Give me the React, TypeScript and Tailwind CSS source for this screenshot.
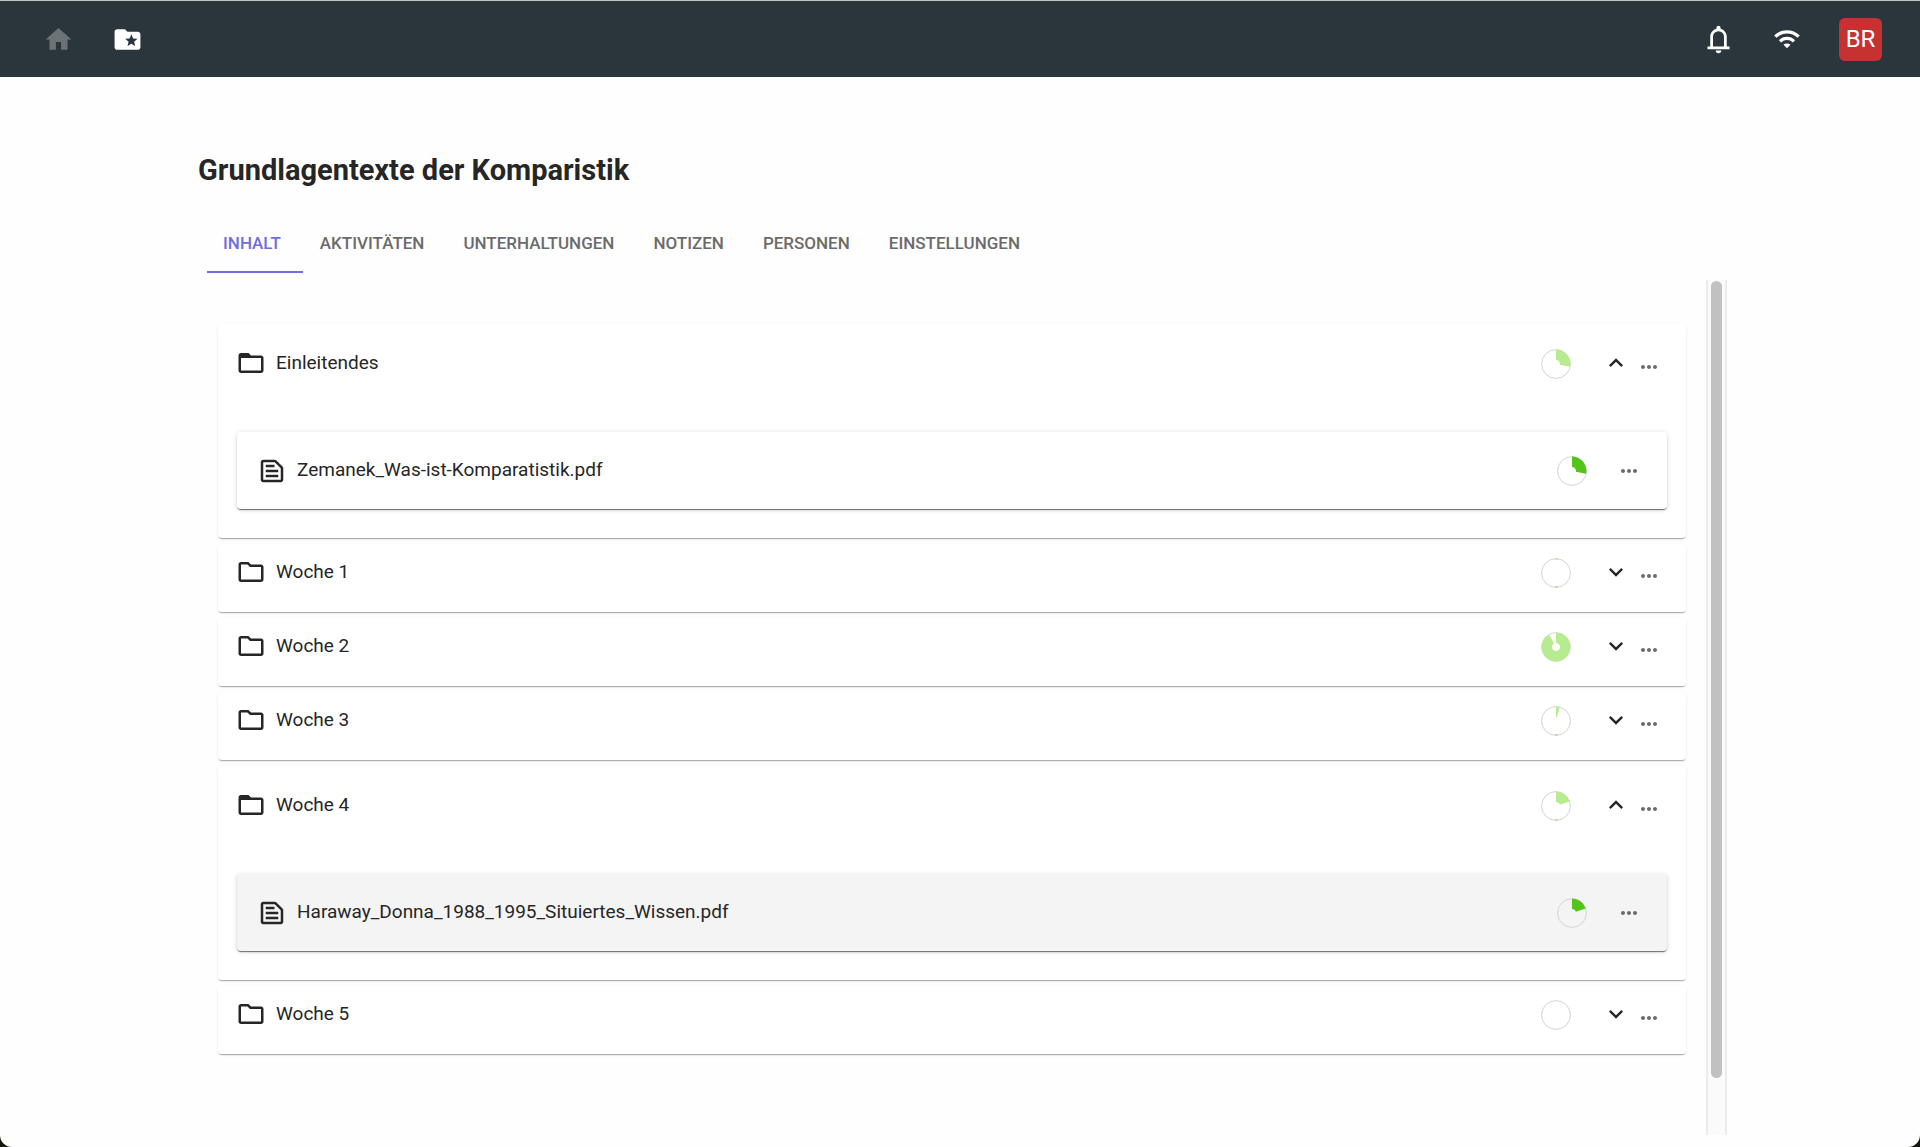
import { useState } from "react";
import {
  MdExpandLess,
  MdExpandMore,
  MdFolderOpen,
  MdFolderSpecial,
  MdHome,
  MdMoreHoriz,
  MdOutlineFolder,
  MdOutlineTextSnippet,
  MdWifi,
} from "react-icons/md";

type FileEntry = { name: string; progress: number; highlighted?: boolean };
type Folder = { name: string; progress: number; started: boolean; files: FileEntry[]; open: boolean };

const TABS = ["INHALT", "AKTIVITÄTEN", "UNTERHALTUNGEN", "NOTIZEN", "PERSONEN", "EINSTELLUNGEN"];

const FOLDERS: Folder[] = [
  {
    name: "Einleitendes",
    progress: 28,
    started: false,
    open: true,
    files: [{ name: "Zemanek_Was-ist-Komparatistik.pdf", progress: 28 }],
  },
  { name: "Woche 1", progress: 0, started: true, open: false, files: [] },
  { name: "Woche 2", progress: 92, started: false, open: false, files: [] },
  { name: "Woche 3", progress: 4, started: true, open: false, files: [] },
  {
    name: "Woche 4",
    progress: 20,
    started: true,
    open: true,
    files: [{ name: "Haraway_Donna_1988_1995_Situiertes_Wissen.pdf", progress: 20, highlighted: true }],
  },
  { name: "Woche 5", progress: 0, started: false, open: false, files: [] },
];

function BellIcon() {
  return (
    <svg viewBox="0 0 24 24" className="size-[33px]" fill="currentColor" aria-hidden="true">
      <path
        fillRule="evenodd"
        d="M4 19v-2h2v-7c0-2.77 1.88-5.11 4.5-5.8v-.7a1.5 1.5 0 0 1 3 0v.7C16.12 4.89 18 7.23 18 10v7h2v2H4zM8 17h8v-7a4 4 0 0 0-8 0v7zM12 22a2 2 0 0 1-2-2h4a2 2 0 0 1-2 2z"
      />
    </svg>
  );
}

function ProgressPie({
  value,
  strong = false,
  started = false,
}: {
  value: number;
  strong?: boolean;
  started?: boolean;
}) {
  const angle = (value / 100) * 2 * Math.PI;
  const point = (r: number) => `${15 + r * Math.sin(angle)} ${15 - r * Math.cos(angle)}`;
  const large = value > 50 ? 1 : 0;
  const wedge = `M15 .6A14.4 14.4 0 ${large} 1 ${point(14.4)}L${point(4)}A4 4 0 ${large} 0 15 11Z`;
  return (
    <svg viewBox="0 0 30 30" className="size-[30px] shrink-0" role="img" aria-label={`${value} %`}>
      <circle cx="15" cy="15" r="14.4" fill="none" stroke="#d4d4d4" />
      {value > 0 && <path d={wedge} fill={strong ? "#52c41a" : "#b7eb8f"} />}
      {started && <path d="M14 28h3v1.8h-3z" fill="#b7eb8f" />}
      {started && value === 0 && <path d="M14 .4h3v1.4h-3z" fill="#b7eb8f" />}
    </svg>
  );
}

function FileCard({ file }: { file: FileEntry }) {
  return (
    <li
      className={`flex h-[77px] items-center rounded pr-[26px] pl-5 shadow-[0_2px_1px_-1px_rgba(0,0,0,0.4),0_1px_1px_rgba(0,0,0,0.2),0_1px_5px_rgba(0,0,0,0.16)] ${
        file.highlighted ? "bg-[#f4f4f4]" : "bg-white"
      }`}
    >
      <a href="#datei" className="flex min-w-0 flex-1 items-center gap-2.5">
        <MdOutlineTextSnippet className="size-[30px] shrink-0" />
        <span className="truncate">{file.name}</span>
      </a>
      <ProgressPie value={file.progress} strong />
      <button type="button" aria-label="Mehr" className="ml-[30px] text-[#6b6b6b]">
        <MdMoreHoriz className="size-6" />
      </button>
    </li>
  );
}

function FolderCard({ folder }: { folder: Folder }) {
  const [open, setOpen] = useState(folder.open);
  const FolderIcon = open ? MdFolderOpen : MdOutlineFolder;
  const Chevron = open ? MdExpandLess : MdExpandMore;
  return (
    <section className="rounded bg-white shadow-[0_2px_1px_-1px_rgba(0,0,0,0.3),0_1px_3px_rgba(0,0,0,0.1)]">
      <div className={`flex items-center pr-[25px] pl-[18px] ${open ? "pt-[23px] pb-[53px]" : "pt-3 pb-6"}`}>
        <button
          type="button"
          onClick={() => setOpen(!open)}
          className="flex h-8 min-w-0 flex-1 items-center gap-2.5 text-left"
        >
          <FolderIcon className="size-[30px] shrink-0" />
          <span className="truncate">{folder.name}</span>
        </button>
        <div className="pt-0.5">
          <ProgressPie value={folder.progress} started={folder.started} />
        </div>
        <button
          type="button"
          aria-label={open ? "Zuklappen" : "Aufklappen"}
          onClick={() => setOpen(!open)}
          className="ml-[31px]"
        >
          <Chevron className="size-7" />
        </button>
        <button type="button" aria-label="Mehr" className="ml-[7px] pt-2 text-[#6b6b6b]">
          <MdMoreHoriz className="size-6" />
        </button>
      </div>
      {open && folder.files.length > 0 && (
        <ul className="px-[19px] pb-[29px]">
          {folder.files.map((file) => (
            <FileCard key={file.name} file={file} />
          ))}
        </ul>
      )}
    </section>
  );
}

export default function App() {
  const [tab, setTab] = useState(TABS[0]);
  return (
    <div className="min-h-screen bg-[#14160c] font-[Roboto,sans-serif] text-[19px] text-[#262626]">
      <div className="flex min-h-screen flex-col rounded-b-xl bg-[#fefefe]">
        <header className="flex h-[77px] items-center justify-between border-t border-[#c0c4c5] bg-[#2b363c] pr-[38px] pl-[43px] text-white">
          <nav className="flex items-center gap-[38px]">
            <a href="#start" aria-label="Startseite" className="text-[#6b7377]">
              <MdHome className="size-[31px]" />
            </a>
            <a href="#kurse" aria-label="Kurse">
              <MdFolderSpecial className="size-[31px]" />
            </a>
          </nav>
          <div className="flex items-center">
            <button type="button" aria-label="Benachrichtigungen">
              <BellIcon />
            </button>
            <MdWifi className="ml-[38px] size-7" role="img" aria-label="Verbunden" />
            <button
              type="button"
              className="ml-[38px] flex size-[43px] items-center justify-center rounded-md bg-[#c53231] text-2xl"
            >
              BR
            </button>
          </div>
        </header>

        <main className="mx-auto flex w-4/5 flex-1 flex-col pt-[77px] pr-px pb-3">
          <h1 className="pl-1.5 text-[29px] leading-8 font-bold">Grundlagentexte der Komparistik</h1>
          <div role="tablist" className="mt-7 flex gap-px pl-[15px]">
            {TABS.map((name) => (
              <button
                key={name}
                type="button"
                role="tab"
                aria-selected={name === tab}
                onClick={() => setTab(name)}
                className={`h-[59px] border-y-2 border-t-transparent pr-[22px] pl-4 text-[17px] font-medium ${
                  name === tab ? "border-b-[#6e6fdc] text-[#6e6fdc]" : "border-b-transparent text-[#6b6b6b]"
                }`}
              >
                {name}
              </button>
            ))}
          </div>

          <div className="mt-[7px] flex flex-1">
            <div className="flex flex-1 flex-col gap-1.5 pt-11 pr-5 pb-20 pl-[26px]">
              {FOLDERS.map((folder) => (
                <FolderCard key={folder.name} folder={folder} />
              ))}
            </div>
            <div className="flex w-[21px] flex-col items-center border-x-2 border-[#ebebeb] bg-[#fafafa] pt-px">
              <div className="w-[11px] grow-14 rounded-full bg-[#c1c1c1]" />
              <div className="grow" />
            </div>
          </div>
        </main>
      </div>
    </div>
  );
}
